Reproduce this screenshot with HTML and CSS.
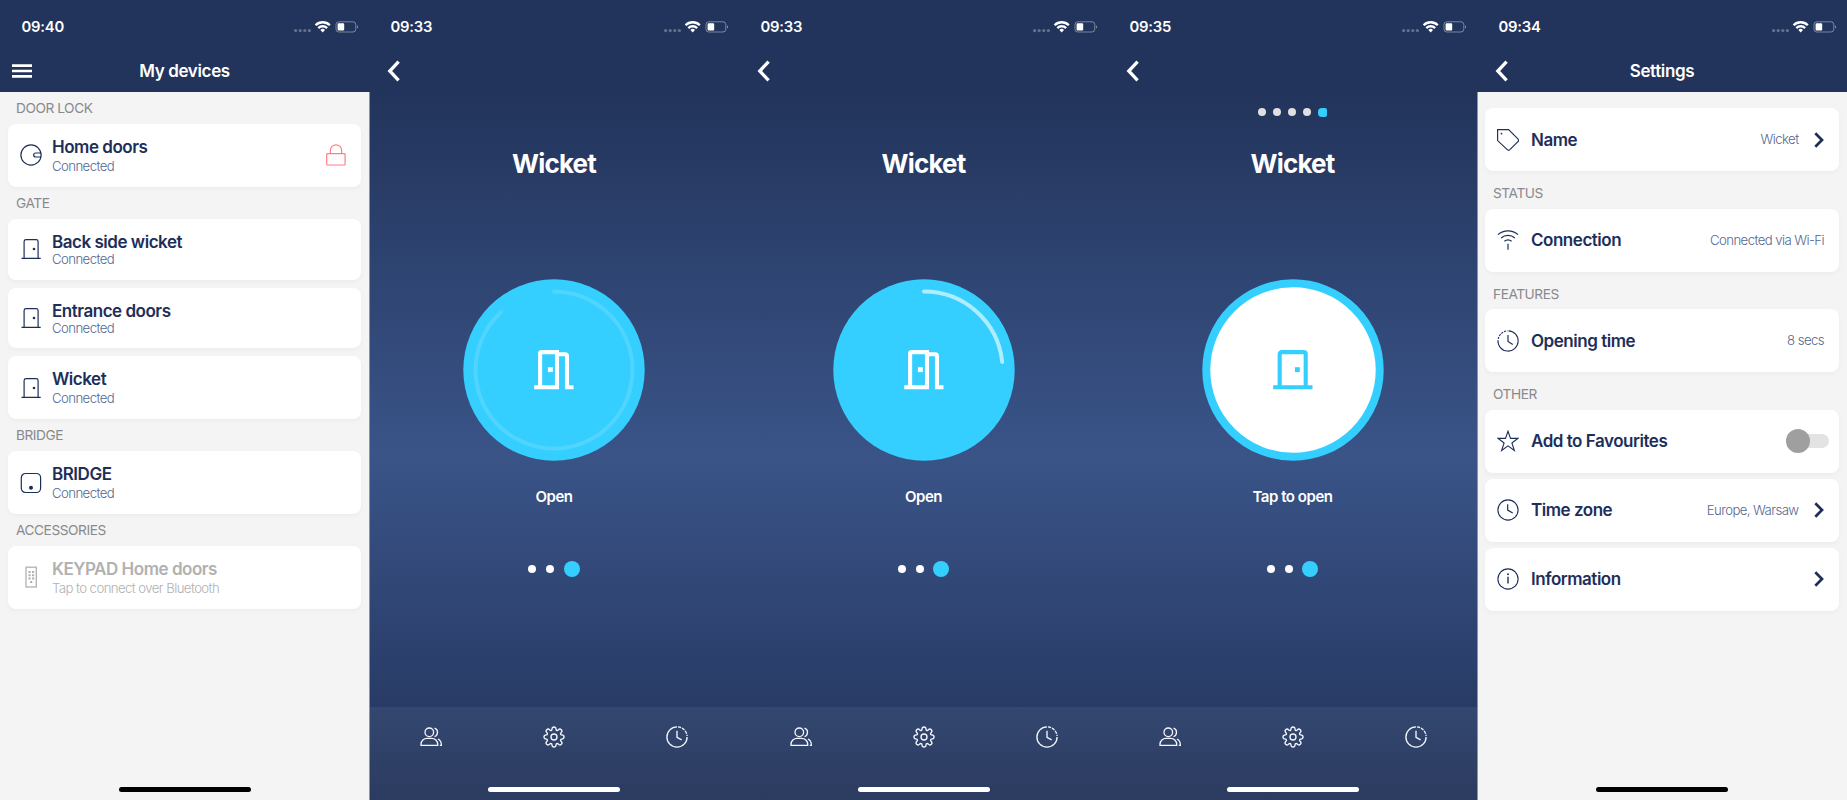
FILE: index.html
```html
<!DOCTYPE html>
<html lang="en">
<head>
<meta charset="utf-8">
<title>My devices</title>
<link rel="stylesheet" href="styles.css">
</head>
<body>
<svg class="sprite" aria-hidden="true">
  <symbol id="status" viewBox="0 0 68 16">
    <g fill="#fff" fill-opacity=".3"><circle cx="2.6" cy="11.6" r="1.6"/><circle cx="7.2" cy="11.6" r="1.6"/><circle cx="11.8" cy="11.6" r="1.6"/><circle cx="16.4" cy="11.6" r="1.6"/></g>
    <g fill="none" stroke="#fff" stroke-width="2.3"><path d="M22.6 6.2a10 10 0 0 1 14.200 0"/><path d="M25.300 9.100a6.200 6.200 0 0 1 8.800 0"/></g>
    <path d="M27.400 10.900a3.300 3.300 0 0 1 4.600 0l-2.300 2.500z" fill="#fff"/>
    <rect x="43" y="2.800" width="19.800" height="10.200" rx="2.800" fill="none" stroke="#fff" stroke-opacity=".4"/>
    <rect x="44.600" y="4.300" width="6.600" height="7.200" rx="1.100" fill="#fff"/>
    <path d="M64 6.200c1.400.4 1.400 3 0 3.400z" fill="#fff" fill-opacity=".45"/>
  </symbol>
  <symbol id="back" viewBox="0 0 14 22"><path d="M11.6 1.600 2.800 11l8.800 9.400" fill="none" stroke="currentColor" stroke-width="3.300"/></symbol>
  <symbol id="next" viewBox="0 0 10 16"><path d="M1.3 1.3 8 8l-6.7 6.7" fill="none" stroke="currentColor" stroke-width="2.7"/></symbol>
  <symbol id="menu" viewBox="0 0 20 14"><path d="M0 1.6h20M0 7h20M0 12.4h20" stroke="#fff" stroke-width="2.7"/></symbol>
  <symbol id="knob" viewBox="0 0 22 22"><g fill="none" stroke="currentColor" stroke-width="1.200"><circle cx="11" cy="11" r="10.1"/><path d="M21 9h-5.300a2 2 0 0 0 0 4H21"/></g></symbol>
  <symbol id="lock" viewBox="0 0 22 22"><g fill="none" stroke="currentColor" stroke-width="1.2"><rect x="1.7" y="9.6" width="18.4" height="11.4" rx=".8"/><path d="M5.4 9.6V6.4a5.6 5.6 0 0 1 11.2 0v3.2"/></g></symbol>
  <symbol id="door" viewBox="0 0 22 22"><path d="M1.5 20.3h19.2M4.1 20.3V3.5A2 2 0 0 1 6.1 1.6h10a2 2 0 0 1 2 1.9v16.8" fill="none" stroke="currentColor" stroke-width="1.2"/><circle cx="14" cy="11" r="1.3" fill="currentColor"/></symbol>
  <symbol id="bridge" viewBox="0 0 22 22"><rect x="1.3" y="1.5" width="19.3" height="19" rx="4.2" fill="none" stroke="currentColor" stroke-width="1.2"/><circle cx="11" cy="15.8" r="2" fill="currentColor"/></symbol>
  <symbol id="keypad" viewBox="0 0 22 22"><rect x="6" y="1.2" width="10.3" height="19.8" fill="none" stroke="currentColor" stroke-width="1.3"/><path d="M8.4 6h2.2M12 6h2.2M8.4 9.3h2.2M12 9.3h2.2M8.4 12.6h2.2M12 12.6h2.2M10.1 15.9h2.2" stroke="currentColor" stroke-width="2"/></symbol>
  <symbol id="tag" viewBox="0 0 22 22"><path d="M.6.6h11l9.3 9.3q1.4 1.4 0 2.8l-8 8q-1.3 1.2-2.6 0L.6 11.6z" fill="none" stroke="currentColor" stroke-width="1.150"/><circle cx="4.5" cy="4.6" r=".9" fill="currentColor"/></symbol>
  <symbol id="signal" viewBox="0 0 22 22"><path d="M1 5.6C6.500 .6 15.500 .6 21 5.600M4.100 9c4-3.500 9.800-3.500 13.800 0M7.400 12.300c2.100-1.800 5.100-1.800 7.200 0M11 14.800v6" fill="none" stroke="currentColor" stroke-width="1.200"/></symbol>
  <symbol id="clock" viewBox="0 0 22 22"><circle cx="11" cy="11" r="10.100" fill="none" stroke="currentColor" stroke-width="1.100"/><path d="M10.700 5.200v5.900l5 3" fill="none" stroke="currentColor" stroke-width="1.200"/></symbol>
  <symbol id="timer" viewBox="0 0 22 22"><path d="M11.500.9A10.100 10.100 0 1 1 1 10.100" fill="none" stroke="currentColor" stroke-width="1.100"/><path d="M1.200 9A10.100 10.100 0 0 1 10.500.9" fill="none" stroke="currentColor" stroke-width="1.100" stroke-dasharray="2.200 1"/><path d="M11 5v6.500l4.800 3.100" fill="none" stroke="currentColor" stroke-width="1.200"/></symbol>
  <symbol id="star" viewBox="0 0 22 22"><path d="m11 1.200 2.500 7.200h7.300l-5.900 4.600 2.500 7.500-6.400-4.600-6.400 4.600L7.100 13 1.200 8.400h7.300z" fill="none" stroke="currentColor" stroke-width="1.100"/></symbol>
  <symbol id="info" viewBox="0 0 22 22"><circle cx="11" cy="11" r="10.100" fill="none" stroke="currentColor" stroke-width="1.100"/><path d="M11 8.700v6.800" stroke="currentColor" stroke-width="1.400"/><circle cx="11" cy="6.300" r=".95" fill="currentColor"/></symbol>
  <symbol id="users" viewBox="0 0 22 22"><g fill="none" stroke="currentColor" stroke-width="1.300"><circle cx="9.300" cy="6.300" r="4.300"/><path d="M1 19.400v-1.300a6 6 0 0 1 6-5.700h4.700a6 6 0 0 1 6 5.700v1.300zM14.500 2.200c4 1 4 7.200 0 8.400M18 13c2.500 1.300 3.500 3.500 3.300 6.400h-1.500"/></g></symbol>
  <symbol id="gear" viewBox="0 0 22 22"><g fill="none" stroke="currentColor" stroke-width="1.350" stroke-linejoin="round"><circle cx="11" cy="11" r="3"/><path d="M9.300 1.800Q11 .100 12.700 1.800L13.300 4.100Q14.300 4.900 15.300 3.900Q16.800 2.300 18.300 3.700Q19.700 5.200 18.100 6.700Q17.100 7.700 17.900 8.700L20.200 9.300Q21.900 11 20.200 12.700L17.900 13.300Q17.100 14.300 18.100 15.300Q19.700 16.800 18.300 18.300Q16.800 19.700 15.300 18.100Q14.300 17.100 13.300 17.900L12.700 20.200Q11 21.900 9.300 20.200L8.700 17.900Q7.700 17.100 6.700 18.100Q5.200 19.700 3.700 18.300Q2.300 16.800 3.900 15.300Q4.900 14.300 4.100 13.300L1.800 12.700Q.100 11 1.800 9.300L4.100 8.700Q4.900 7.700 3.900 6.700Q2.300 5.200 3.700 3.700Q5.200 2.300 6.700 3.900Q7.700 4.900 8.700 4.100Z"/></g></symbol>
  <symbol id="history" viewBox="0 0 22 22"><path d="M11 .9A10.100 10.100 0 1 0 21.100 11" fill="none" stroke="currentColor" stroke-width="1.350"/><path d="M12 .9A10.100 10.100 0 0 1 21.100 10" fill="none" stroke="currentColor" stroke-width="1.300" stroke-dasharray="3.200 1"/><path d="M11 4.800v6.500l4.600 2.600" fill="none" stroke="currentColor" stroke-width="1.350"/></symbol>
  <symbol id="door-open" viewBox="0 0 40 40"><path d="M.2 37.300h22.800V2.100H7.600a1.500 1.500 0 0 0-1.500 1.500v33.700M23 4.200h8a2 2 0 0 1 2 2v31.100h6.500" fill="none" stroke="currentColor" stroke-width="4.100"/><rect x="13.900" y="17.200" width="4.900" height="4.900" fill="currentColor"/></symbol>
  <symbol id="door-closed" viewBox="0 0 40 40"><path d="M.2 37.300h39.300M6.700 37.300V4.100a2 2 0 0 1 2-2h22a2 2 0 0 1 2 2v33.200" fill="none" stroke="currentColor" stroke-width="4.100"/><rect x="21.900" y="17.200" width="4.900" height="4.900" fill="currentColor"/></symbol>
</svg>
<main class="screens">

  <section class="screen light">
    <header class="top">
      <div class="statusbar"><time>09:40</time><svg class="status"><use href="#status"/></svg></div>
      <div class="nav"><svg class="menu"><use href="#menu"/></svg><h1>My devices</h1></div>
    </header>
    <div class="list">
      <h2>DOOR LOCK</h2>
      <article class="card"><svg class="icon"><use href="#knob"/></svg><div class="text"><h3>Home doors</h3><p>Connected</p></div><svg class="icon locked"><use href="#lock"/></svg></article>
      <h2>GATE</h2>
      <article class="card compact"><svg class="icon"><use href="#door"/></svg><div class="text"><h3>Back side wicket</h3><p>Connected</p></div></article>
      <article class="card compact"><svg class="icon"><use href="#door"/></svg><div class="text"><h3>Entrance doors</h3><p>Connected</p></div></article>
      <article class="card"><svg class="icon"><use href="#door"/></svg><div class="text"><h3>Wicket</h3><p>Connected</p></div></article>
      <h2>BRIDGE</h2>
      <article class="card"><svg class="icon"><use href="#bridge"/></svg><div class="text"><h3>BRIDGE</h3><p>Connected</p></div></article>
      <h2>ACCESSORIES</h2>
      <article class="card off"><svg class="icon"><use href="#keypad"/></svg><div class="text"><h3>KEYPAD Home doors</h3><p>Tap to connect over Bluetooth</p></div></article>
    </div>
    <div class="home-bar"></div>
  </section>

  <section class="screen device edge">
    <header class="top">
      <div class="statusbar"><time>09:33</time><svg class="status"><use href="#status"/></svg></div>
      <div class="nav"><svg class="back"><use href="#back"/></svg></div>
    </header>
    <div class="steps"></div>
    <h1 class="name">Wicket</h1>
    <svg class="dial" viewBox="0 0 182 182"><circle cx="91" cy="91" r="90.700" fill="#35cfff"/><path d="M91 12.500A78.500 78.500 0 1 1 37.800 33.300" fill="none" stroke="#fff" stroke-opacity=".13" stroke-width="4" stroke-linecap="round"/><use href="#door-open" x="71" y="71" width="40" height="40" color="#fff"/></svg>
    <p class="action">Open</p>
    <div class="pager"><i></i><i></i><i class="on"></i></div>
    <footer class="tabs"><svg class="icon"><use href="#users"/></svg><svg class="icon"><use href="#gear"/></svg><svg class="icon"><use href="#history"/></svg></footer>
    <div class="home-bar"></div>
  </section>

  <section class="screen device">
    <header class="top">
      <div class="statusbar"><time>09:33</time><svg class="status"><use href="#status"/></svg></div>
      <div class="nav"><svg class="back"><use href="#back"/></svg></div>
    </header>
    <div class="steps"></div>
    <h1 class="name">Wicket</h1>
    <svg class="dial" viewBox="0 0 182 182"><circle cx="91" cy="91" r="90.700" fill="#35cfff"/><path d="M91 12.500A78.500 78.500 0 0 1 169.200 83" fill="none" stroke="#fff" stroke-opacity=".6" stroke-width="4" stroke-linecap="round"/><use href="#door-open" x="71" y="71" width="40" height="40" color="#fff"/></svg>
    <p class="action">Open</p>
    <div class="pager"><i></i><i></i><i class="on"></i></div>
    <footer class="tabs"><svg class="icon"><use href="#users"/></svg><svg class="icon"><use href="#gear"/></svg><svg class="icon"><use href="#history"/></svg></footer>
    <div class="home-bar"></div>
  </section>

  <section class="screen device">
    <header class="top">
      <div class="statusbar"><time>09:35</time><svg class="status"><use href="#status"/></svg></div>
      <div class="nav"><svg class="back"><use href="#back"/></svg></div>
    </header>
    <div class="steps"><i></i><i></i><i></i><i></i><i class="on"></i></div>
    <h1 class="name">Wicket</h1>
    <svg class="dial" viewBox="0 0 182 182"><circle cx="91" cy="91" r="86.700" fill="#fff" stroke="#35cfff" stroke-width="8"/><use href="#door-closed" x="71" y="71" width="40" height="40" color="#35cfff"/></svg>
    <p class="action">Tap to open</p>
    <div class="pager"><i></i><i></i><i class="on"></i></div>
    <footer class="tabs"><svg class="icon"><use href="#users"/></svg><svg class="icon"><use href="#gear"/></svg><svg class="icon"><use href="#history"/></svg></footer>
    <div class="home-bar"></div>
  </section>

  <section class="screen light settings edge">
    <header class="top">
      <div class="statusbar"><time>09:34</time><svg class="status"><use href="#status"/></svg></div>
      <div class="nav"><svg class="back"><use href="#back"/></svg><h1>Settings</h1></div>
    </header>
    <div class="list">
      <article class="card"><svg class="icon"><use href="#tag"/></svg><h3>Name</h3><span class="value">Wicket</span><svg class="next"><use href="#next"/></svg></article>
      <h2>STATUS</h2>
      <article class="card"><svg class="icon"><use href="#signal"/></svg><h3>Connection</h3><span class="value">Connected via Wi-Fi</span></article>
      <h2>FEATURES</h2>
      <article class="card"><svg class="icon"><use href="#timer"/></svg><h3>Opening time</h3><span class="value">8 secs</span></article>
      <h2>OTHER</h2>
      <article class="card"><svg class="icon"><use href="#star"/></svg><h3>Add to Favourites</h3><span class="switch"><i></i></span></article>
      <article class="card"><svg class="icon"><use href="#clock"/></svg><h3>Time zone</h3><span class="value">Europe, Warsaw</span><svg class="next"><use href="#next"/></svg></article>
      <article class="card"><svg class="icon"><use href="#info"/></svg><h3>Information</h3><svg class="next"><use href="#next"/></svg></article>
    </div>
    <div class="home-bar"></div>
  </section>

</main>
</body>
</html>
```
FILE: styles.css
```css
* { box-sizing: border-box; margin: 0; }
body { font-family: Inter, "Liberation Sans", sans-serif; color: #1d2f59; background: #22345b; overflow: hidden; }
h1, h2, h3, p { font-weight: 600; }
svg { display: block; flex: none; }
.sprite { position: absolute; width: 0; height: 0; }

.screens { display: grid; grid-template-columns: 369px 370px 369px 369px 370px; width: 1847px; height: 800px; }
.screen { display: flex; flex-direction: column; align-items: stretch; min-width: 0; height: 800px; }
.light { background: #f4f4f4; }

.top { height: 92px; flex: none; background: #22345b; color: #fff; }
.statusbar { display: flex; justify-content: space-between; align-items: center; height: 38px; padding: 16px 8.5px 0 21.500px; }
.statusbar time { font-size: 14.800px; line-height: 22px; font-weight: 600; letter-spacing: -.2px; }
.status { width: 68px; height: 16px; }
.nav { display: grid; grid-template-columns: 60px 1fr 60px; align-items: center; height: 54px; padding-top: 12px; }
.nav h1 { grid-column: 2; font-size: 17px; line-height: 22px; letter-spacing: -.35px; text-align: center; }
.menu { width: 20px; height: 14px; margin-left: 12px; }
.back { width: 14px; height: 22px; margin-left: 18px; }

.list { flex: 1; padding: .3px 8px 0; }
.list h2 { height: 31.700px; padding: 0 8px; font-size: 13.700px; line-height: 32px; font-weight: 400; color: #898a8d; letter-spacing: -.45px; }
.card { display: flex; align-items: center; height: 63px; padding: 0 14px 0 11.500px; background: #fff; border-radius: 8px; box-shadow: 0 2px 5px rgba(0, 0, 0, .035); }
.card + .card { margin-top: 8px; }
.compact { height: 60.900px; }
.icon { width: 22px; height: 22px; }
.text { margin-left: 10.500px; padding-top: 2px; flex: 1; }
.compact .text { padding-top: 0; }
.card h3 { font-size: 17px; line-height: 20px; letter-spacing: -.47px; }
.text p, .value { font-size: 13.200px; line-height: 19px; font-weight: 300; letter-spacing: -.58px; color: #566790; }
.compact .text p { line-height: 15px; }
.locked { color: #ff7f84; }
.off .icon, .off h3, .off .text p { color: #b1b1b1; }

.settings .list { padding-top: 16px; }
.settings .list h2 { height: 37.500px; padding-top: 6px; }
.settings .card { padding-right: 15px; }
.settings .card + .card { margin-top: 6px; }
.settings h3 { margin-left: 12.500px; flex: 1; }
.next { width: 10px; height: 16px; margin-left: 15.500px; }
.switch { display: flex; align-items: center; width: 42px; height: 14.500px; margin-right: -5px; border-radius: 8px; background: #e3e3e3; }
.switch i { width: 24px; height: 24px; flex: none; margin-left: -1px; border-radius: 50%; background: #9f9f9f; }

.device { align-items: center; color: #fff; background: linear-gradient(#22345b 92px, #3a5488 455px, #283b66 707px, #33476f 707px, #2c3b60 800px); }
.device .top { align-self: stretch; background: none; }
.edge { box-shadow: inset 1px 0 #8893b3; }
.edge .top, .device.edge .top { background: #22345b; }
.steps { display: flex; align-items: center; gap: 6.800px; height: 40px; flex: none; }
.steps i { width: 8px; height: 8px; border-radius: 50%; background: #e1dfdf; }
.steps .on { width: 9px; height: 9px; border-radius: 4px 2px 2px 4px; background: #35cfff; }
.name { height: 62px; padding-top: 1px; font-size: 26px; line-height: 62px; letter-spacing: -.8px; font-weight: 700; }
.dial { width: 182px; height: 182px; margin-top: 85.300px; }
.action { margin-top: 26px; font-size: 15px; line-height: 20px; letter-spacing: -.45px; }
.pager { display: flex; align-items: center; gap: 9.700px; height: 16px; margin-top: 53.700px; }
.pager i { width: 8px; height: 8px; border-radius: 50%; background: #fff; }
.pager .on { width: 16px; height: 16px; background: #35cfff; }
.tabs { display: grid; grid-template-columns: repeat(3, 1fr); justify-items: center; align-self: stretch; height: 80px; padding-top: 19px; margin-top: auto; color: #f4f7fc; }
.home-bar { align-self: center; width: 132px; height: 5px; flex: none; margin-bottom: 8px; border-radius: 3px; background: #fff; }
.light .home-bar { background: #000; }
```
